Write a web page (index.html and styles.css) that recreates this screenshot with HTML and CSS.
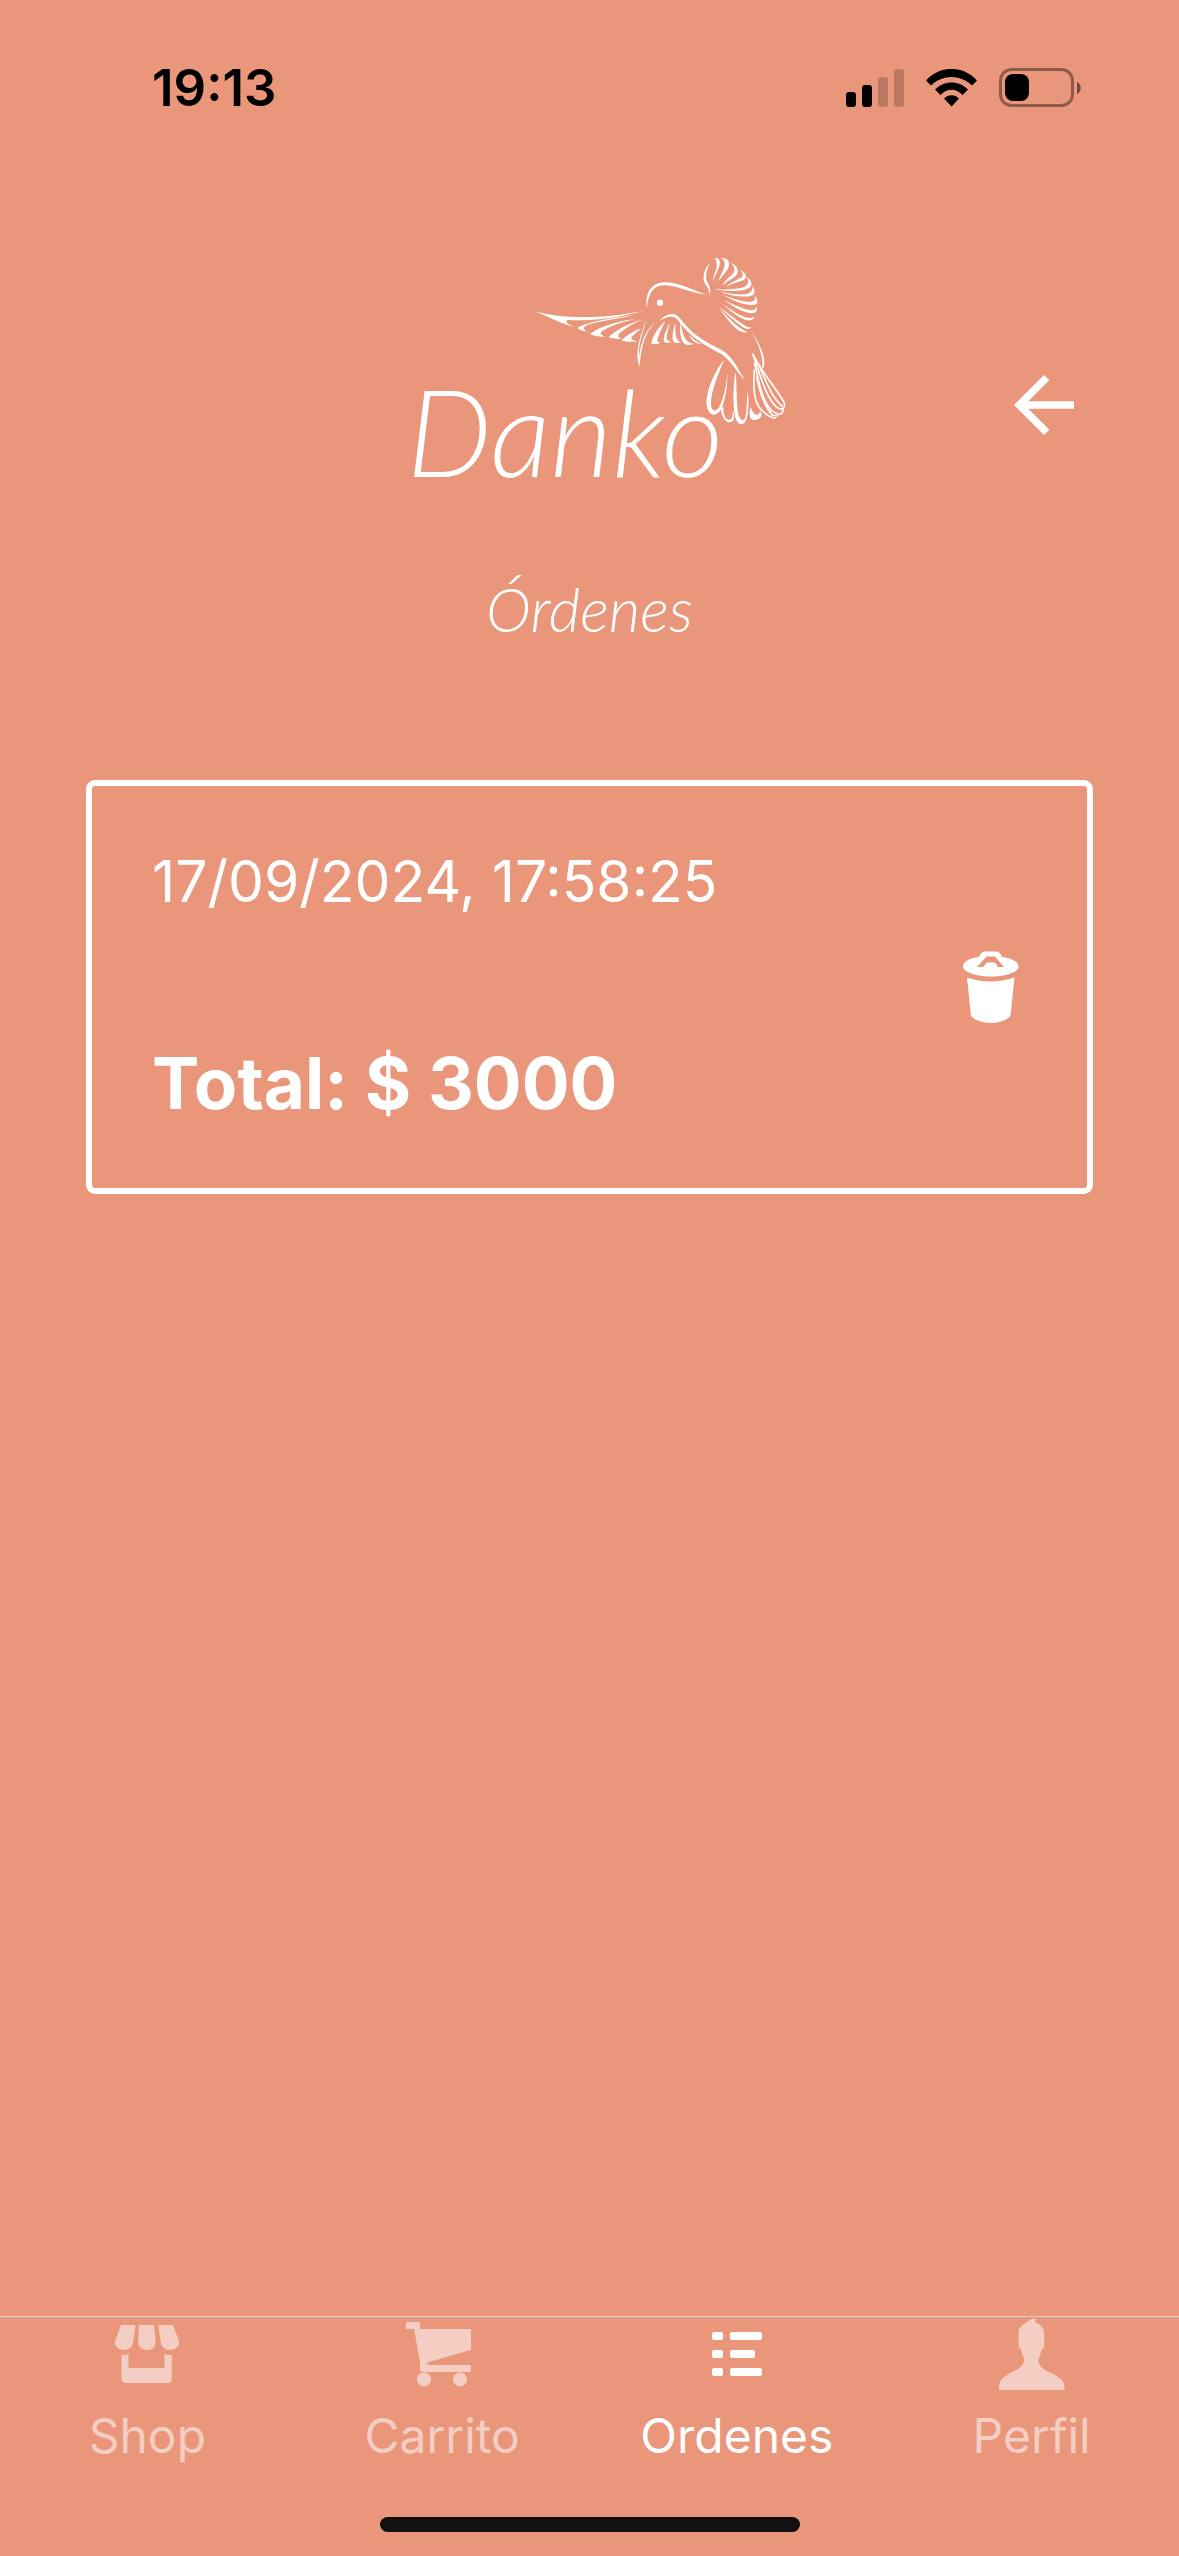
FILE: index.html
```html
<!DOCTYPE html>
<html lang="es">
<head>
<meta charset="utf-8">
<meta name="viewport" content="width=device-width, initial-scale=1">
<title>Danko – Órdenes</title>
<link rel="stylesheet" href="styles.css">
</head>
<body>
<div class="status-bar">
  <time class="status-time">19:13</time>
  <div class="status-icons">
    <svg width="58" height="38" viewBox="0 0 58 38" aria-hidden="true">
      <rect x="0" y="23" width="10" height="15" rx="3"/>
      <rect x="16" y="16" width="10" height="22" rx="3"/>
      <rect class="dim-bar" x="32" y="8" width="10" height="30" rx="3"/>
      <rect class="dim-bar" x="48" y="0" width="10" height="38" rx="3"/>
    </svg>
    <svg width="51" height="38" viewBox="0 0 51 38" aria-hidden="true">
      <path d="M0 11.5C14-4 37-4 51 11.5L46 16.500C34 5 17 5 5 16.500Z"/>
      <path d="M9 20.500C18 11 33 11 42 20.500L36.500 26C30 19 21 19 14.500 26Z"/>
      <path d="M18 29.500C22 25 29 25 33 29.500L25.500 37.500Z"/>
    </svg>
    <svg width="82" height="40" viewBox="0 0 82 40" aria-hidden="true">
      <rect class="battery-shell" x="1.500" y="1.500" width="72" height="36" rx="11"/>
      <rect x="6" y="6" width="24" height="27" rx="8"/>
      <path class="battery-nub" d="M78 14C83 16 83 24 78 26Z"/>
    </svg>
  </div>
</div>

<header class="header">
  <svg class="logo" viewBox="-30 45 1200 900" role="img" aria-label="Danko">
    <g class="logo-fill">
      <path d="M740 205C734 150 760 127 798 127C845 129 880 152 922 165C880 160 838 140 798 136C763 134 746 155 740 205Z"/>
      <circle cx="780" cy="188" r="9.500"/>
      <path d="M402 212C470 235 600 240 732 212C640 238 560 243 505 240C492 241 498 249 524 262C480 248 440 229 402 212Z"/>
      <path d="M700 226C640 234 575 242 534 262C530 268 545 272 561 275C547 268 549 259 570 252C610 242 660 236 700 226Z"/>
      <path d="M702 238C650 243 602 260 571 281C575 287 595 290 616 290C598 284 598 277 612 270C635 257 665 247 702 238Z"/>
      <path d="M727 239C690 248 650 268 626 291C635 296 648 297 665 297C651 292 653 285 662 277C680 262 700 250 727 239Z"/>
      <path d="M724 265C700 273 680 286 664 301C675 306 695 306 712 305C694 301 690 296 697 289C705 281 714 274 724 265Z"/>
      <path d="M740 234C725 280 702 330 718 381C724 340 725 290 764 250C735 272 722 310 718 348C712 320 730 275 740 234Z"/>
      <path d="M778 243C795 222 825 212 840 235C880 288 920 308 970 333C1000 353 1015 390 1036 423C1010 395 995 366 965 343C920 317 880 302 834 241C822 224 800 229 778 243Z"/>
      <path d="M796 243C775 262 756 290 754 311C765 314 775 312 781 308C770 305 770 300 775 290C782 270 790 256 796 243Z"/>
      <path d="M811 247C800 268 788 290 792 306C800 309 808 309 813 305C801 303 798 297 801 285C804 270 808 258 811 247Z"/>
      <path d="M826 248C819 270 814 295 822 307C830 310 838 310 844 307C829 302 825 290 826 248Z"/>
      <path d="M842 243C838 275 841 300 854 312C863 316 872 315 881 312C857 306 848 290 842 243Z"/>
      <path d="M868 283C872 300 884 312 906 312C888 306 878 298 868 283Z"/>
      <path d="M930 68C908 90 906 120 918 136C926 146 927 152 929 164C934 150 928 136 922 126C914 110 920 88 930 68Z"/>
      <path d="M943 54C956 52 962 60 959 74C955 92 945 105 938 124C942 102 952 87 950 70C949 62 948 58 943 54Z"/>
      <path d="M963 54C982 52 991 65 986 80C980 97 965 107 954 127C962 101 976 85 974 70C973 62 970 58 963 54Z"/>
      <path d="M992 69C1009 74 1020 92 1010 104C1000 117 982 120 967 138C976 115 1000 106 1003 92C1005 82 1000 76 992 69Z"/>
      <path d="M1019 90C1037 96 1044 112 1032 119C1015 128 995 128 978 142C994 122 1022 118 1028 108C1030 100 1026 96 1019 90Z"/>
      <path d="M1039 111C1053 117 1059 133 1050 142C1030 157 980 155 942 148C980 149 1020 148 1038 138C1048 131 1046 120 1039 111Z"/>
      <path d="M1057 138C1067 150 1065 163 1055 167C1030 174 990 166 960 155C1000 163 1030 166 1045 160C1056 156 1058 148 1057 138Z"/>
      <path d="M1065 168C1076 180 1074 193 1062 195C1030 195 1000 182 968 164C1000 177 1035 187 1055 185C1066 183 1066 176 1065 168Z"/>
      <path d="M1070 199C1074 212 1067 221 1054 220C1020 213 995 197 972 179C1000 194 1035 210 1056 211C1066 210 1069 206 1070 199Z"/>
      <path d="M1063 228C1063 240 1050 244 1035 239C1005 226 985 207 964 188C990 208 1020 229 1044 233C1055 235 1060 234 1063 228Z"/>
      <path d="M1055 260C1050 270 1038 269 1025 259C1000 240 980 222 958 200C985 220 1010 241 1035 257C1044 262 1050 263 1055 260Z"/>
      <path d="M1042 276C1028 282 1012 271 995 253C980 236 970 222 958 203C980 228 1012 264 1042 276Z"/>
      <path d="M1054 272C1077 310 1100 348 1091 384L1087 384C1091 348 1074 312 1054 272Z"/>
      <path d="M973 358C940 400 910 470 923 507C932 531 952 529 963 508C976 480 983 440 982 398C979 440 970 478 956 504C945 519 932 510 933 488C934 450 955 405 973 358Z"/>
      <path d="M962 506C964 524 974 546 988 547C1002 546 1006 535 999 510C999 534 994 541 984 539C974 535 970 522 970 500Z"/>
      <path d="M1007 395C998 440 998 512 1009 540C1018 560 1036 556 1041 530C1047 500 1047 480 1043 452C1039 490 1042 520 1033 538C1024 548 1014 530 1012 500C1009 460 1010 430 1007 395Z"/>
      <path d="M1052 500C1044 528 1050 541 1066 540C1082 537 1090 528 1080 513C1078 528 1062 532 1052 500Z"/>
    </g>
    <g class="logo-line">
      <path d="M1063 390C1060 440 1060 478 1080 505C1095 521 1112 535 1126 534"/>
      <path d="M1058 342C1085 395 1124 440 1151 485C1160 504 1144 514 1128 500C1097 470 1082 408 1058 342"/>
      <path d="M1064 370C1078 430 1085 480 1115 512C1132 524 1148 530 1149 508"/>
      <path d="M1070 410C1080 460 1092 500 1118 526L1132 528"/>
      <path d="M1075 372C1100 430 1118 475 1146 498"/>
    </g>
    <text class="logo-name" x="20" y="710">Danko</text>
  </svg>
  <button class="icon-button back" type="button" aria-label="Volver">
    <svg width="90" height="90" viewBox="0 0 24 24" aria-hidden="true"><path d="M20 11H7.830l5.590-5.590L12 4l-8 8 8 8 1.410-1.410L7.830 13H20v-2z"/></svg>
  </button>
</header>

<main class="content">
  <h1 class="title">Órdenes</h1>
  <article class="order">
    <div class="order-info">
      <p class="order-date">17/09/2024, 17:58:25</p>
      <p class="order-total">Total: $ 3000</p>
    </div>
    <button class="icon-button" type="button" aria-label="Eliminar orden">
      <svg width="56" height="72" viewBox="0 0 56 72" aria-hidden="true">
        <path fill-rule="evenodd" d="M21 .5H34Q37 1 39 6C49 7 55.500 11 55.500 15.500C55.500 21 43 25.500 27.750 25.500S0 21 0 15.500C0 11 6 7 16 6Q18 1 21 .5ZM14 16H20L24 11.500H32L35 16H41L32 5.500H23.500Z"/>
        <path d="M4 26.500Q27.750 34.500 51.500 26.500L47.500 65Q41 72 27.750 72T8 65Z"/>
      </svg>
    </button>
  </article>
</main>

<nav class="tab-bar" aria-label="Principal">
  <a class="tab" href="#shop">
    <svg width="72" height="72" viewBox="0 0 72 72" aria-hidden="true">
      <path d="M10 7H24.500L22 25Q20 32 13 32Q4 31 3.500 24Z M28 7H43L44.700 24Q44 32 36 32T27 24Z M47 7H62L68 23Q68.500 31 60 32Q51 32 50 25Z M10.500 37H14L17.500 36V50H53.500V36L57 37H60.800V61Q60.500 65 57 65H15Q11 65 10.500 61Z"/>
    </svg>
    <span>Shop</span>
  </a>
  <a class="tab" href="#carrito">
    <svg width="72" height="72" viewBox="0 0 72 72" aria-hidden="true">
      <path d="M1 4H14V11H65V31L64 32L23 44Q20 46 23 47H65V52Q65 54 63 54H16Q14 54 14 52V44L8 11H0V5Z"/>
      <circle cx="18" cy="61.500" r="7"/><circle cx="54" cy="61.500" r="7"/>
    </svg>
    <span>Carrito</span>
  </a>
  <a class="tab tab-active" href="#ordenes" aria-current="page">
    <svg width="72" height="72" viewBox="0 0 72 72" aria-hidden="true">
      <rect x="11" y="14" width="11" height="8" rx="2"/><rect x="29" y="14" width="32" height="8" rx="2"/>
      <rect x="11" y="32" width="11" height="8" rx="2"/><rect x="29" y="32" width="25" height="8" rx="2"/>
      <rect x="11" y="50" width="11" height="8" rx="2"/><rect x="29" y="50" width="32" height="8" rx="2"/>
    </svg>
    <span>Ordenes</span>
  </a>
  <a class="tab" href="#perfil">
    <svg width="72" height="72" viewBox="0 0 72 72" aria-hidden="true">
      <path d="M3 72V67C4 60 12 56 20 52Q28 48 28.300 41Q26 37 25 31Q22 30 22.600 23.500V13Q24 7 30 5Q35 0 40.500 1Q38 2 40 5Q45 6 47 11Q49 15 48 23.500Q49 30 45.500 32Q44 39 42 42Q43 49 51 53C60 57 68 61 68.500 68V72Z"/>
    </svg>
    <span>Perfil</span>
  </a>
</nav>
<div class="home-indicator"></div>
</body>
</html>
```

FILE: styles.css
```css
* {
  box-sizing: border-box;
}

body {
  margin: 0;
  min-height: 100vh;
  display: flex;
  flex-direction: column;
  background: #e9967a;
  color: #fff;
  font-family: Inter, "Liberation Sans", sans-serif;
}

svg {
  display: block;
  fill: currentColor;
}

.status-bar {
  display: flex;
  justify-content: space-between;
  align-items: center;
  padding: 53px 98px 0 152px;
  color: #000;
}

.status-time {
  font-size: 51px;
  line-height: 70px;
  font-weight: 600;
}

.status-icons {
  display: flex;
  align-items: center;
  gap: 22px;
}

.dim-bar {
  opacity: 0.2;
}

.battery-shell {
  fill: none;
  stroke: #000;
  stroke-width: 3;
  opacity: 0.4;
}

.battery-nub {
  opacity: 0.5;
}

.header {
  display: grid;
  grid-template-columns: 1fr auto 1fr;
  align-items: center;
  margin-top: 132px;
  padding: 0 90px;
}

.logo {
  grid-column: 2;
  width: 400px;
  height: 300px;
}

.logo-line {
  fill: none;
  stroke: currentColor;
  stroke-width: 5;
  stroke-linecap: round;
}

.logo-name {
  font-family: Lato, sans-serif;
  font-style: italic;
  font-weight: 300;
  font-size: 360px;
}

.icon-button {
  padding: 0;
  border: 0;
  background: none;
  color: inherit;
  cursor: pointer;
}

.back {
  justify-self: end;
}

.content {
  flex: 1;
  padding: 0 86px;
}

.title {
  margin: 12px 0 129px;
  font-family: Lato, sans-serif;
  font-size: 61px;
  line-height: 84px;
  font-style: italic;
  font-weight: 300;
  text-align: center;
}

.order {
  display: flex;
  justify-content: space-between;
  align-items: center;
  padding: 60px 68px 60px 60px;
  border: 6px solid #fff;
  border-radius: 9px;
}

.order-info {
  display: grid;
  gap: 120px;
}

.order-date,
.order-total {
  margin: 0;
}

.order-date {
  font-size: 57px;
  line-height: 72px;
}

.order-total {
  font-size: 71px;
  line-height: 90px;
  font-weight: 700;
}

.tab-bar {
  display: grid;
  grid-template-columns: repeat(4, 1fr);
  padding-top: 1px;
  border-top: 1px solid #d8d8d0;
}

.tab {
  display: flex;
  flex-direction: column;
  align-items: center;
  gap: 16px;
  color: #f4cec2;
  font-size: 48px;
  line-height: 60px;
  text-decoration: none;
}

.tab-active {
  color: #fff;
}

.home-indicator {
  width: 420px;
  height: 15px;
  margin: 51px auto 24px;
  border-radius: 8px;
  background: #111;
}
```
